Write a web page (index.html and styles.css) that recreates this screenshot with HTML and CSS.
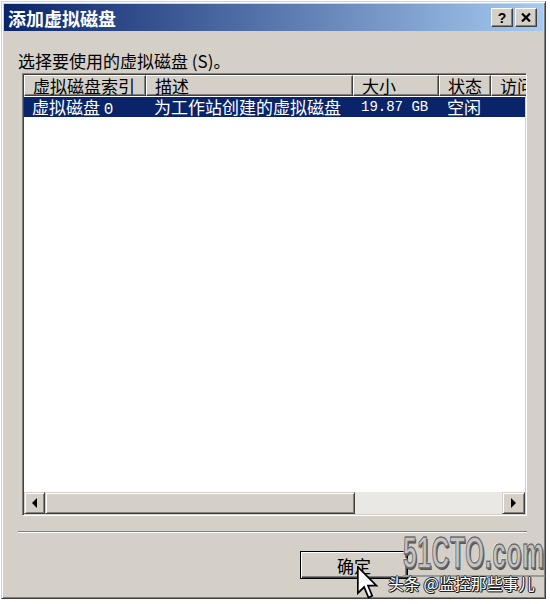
FILE: index.html
```html
<!DOCTYPE html>
<html lang="zh-CN">
<head>
    <meta charset="UTF-8">
    <title>添加虚拟磁盘</title>
    <link rel="stylesheet" href="styles.css">
</head>
<body>
    <div class="window">
        <!-- 标题栏 -->
        <div class="titlebar">
            <span class="title">添加虚拟磁盘</span>
            <div class="title-buttons">
                <span class="tbtn help">?</span>
                <span class="tbtn">
                    <svg width="10" height="9" viewBox="0 0 10 9"><path d="M1 0.5 L9 8.5 M9 0.5 L1 8.5" stroke="#000" stroke-width="2.2"/></svg>
                </span>
            </div>
        </div>

        <div class="content">
            <p class="label">选择要使用的虚拟磁盘 (S)。</p>

            <!-- 磁盘列表 -->
            <div class="listbox">
                <div class="list-head">
                    <div class="head-cell">虚拟磁盘索引</div>
                    <div class="head-cell">描述</div>
                    <div class="head-cell">大小</div>
                    <div class="head-cell">状态</div>
                    <div class="head-cell">访问</div>
                </div>
                <div class="list-row selected">
                    <div class="cell">虚拟磁盘 <span class="num">0</span></div>
                    <div class="cell">为工作站创建的虚拟磁盘</div>
                    <div class="cell mono">19.87 GB</div>
                    <div class="cell">空闲</div>
                    <div class="cell"></div>
                </div>
                <div class="list-empty"></div>
                <div class="hscroll">
                    <div class="sbtn"><span class="arrow-left"></span></div>
                    <div class="thumb"></div>
                    <div class="track"></div>
                    <div class="sbtn"><span class="arrow-right"></span></div>
                </div>
            </div>

            <div class="separator"></div>

            <div class="buttons">
                <button class="btn default">确定</button>
            </div>
        </div>

        <!-- 水印 -->
        <div class="wm-logo">51CTO.com</div>
        <div class="wm-text">头条 @监控那些事儿</div>

        <!-- 鼠标指针 -->
        <svg class="cursor" width="22" height="34" viewBox="0 0 13 20">
            <path d="M0.5 0.5 L0.5 16 L4.2 12.4 L6.8 18.6 L9 17.6 L6.5 11.6 L11.5 11.6 Z" fill="#fff" stroke="#000" stroke-width="1"/>
        </svg>
    </div>
</body>
</html>
```

FILE: styles.css
```css
body {
    margin: 0;
    background: #fff;
    font-family: "Noto Sans CJK SC", sans-serif;
    color: #000;
}
.window {
    position: relative;
    width: 545px;
    height: 598px;
    margin: 1px 0 0 1px;
    box-sizing: border-box;
    background: #d4d0c8;
    border: 1px solid;
    border-color: #d4d0c8 #404040 #404040 #d4d0c8;
    box-shadow: inset 1px 1px #fff, inset -1px -1px #808080;
    padding: 2px;
    display: flex;
    flex-direction: column;
}
.titlebar {
    height: 27px;
    background: linear-gradient(90deg, #0a246a, #a6caf0);
    display: flex;
    align-items: center;
    justify-content: space-between;
    padding: 0 6px 0 4px;
}
.title {
    color: #fff;
    font-weight: bold;
    font-size: 18px;
    line-height: 1;
}
.title-buttons {
    display: flex;
    gap: 2px;
}
.tbtn {
    width: 22px;
    height: 19px;
    box-sizing: border-box;
    background: #d4d0c8;
    border: 1px solid;
    border-color: #fff #404040 #404040 #fff;
    box-shadow: inset -1px -1px #808080;
    display: flex;
    align-items: center;
    justify-content: center;
}
.help {
    font: bold 14px "Liberation Sans", sans-serif;
}
.content {
    flex: 1;
    padding: 18px 16px 0 14px;
    display: flex;
    flex-direction: column;
}
.label {
    margin: 0;
    font-size: 17px;
    line-height: 24px;
}
.listbox {
    margin-left: 4px;
    height: 443px;
    box-sizing: border-box;
    border: 1px solid;
    border-color: #808080 #fff #fff #808080;
    box-shadow: inset 1px 1px #404040, inset -1px -1px #d4d0c8;
    background: #fff;
    padding: 1px;
    display: flex;
    flex-direction: column;
    overflow: hidden;
}
.list-head, .list-row {
    display: grid;
    grid-template-columns: 122px 207px 86px 52px 60px;
}
.list-head {
    height: 21px;
}
.head-cell {
    box-sizing: border-box;
    background: #d4d0c8;
    border: 1px solid;
    border-color: #fff #404040 #404040 #fff;
    box-shadow: inset -1px -1px #808080;
    padding-left: 8px;
    font-size: 17px;
    line-height: 19px;
    white-space: nowrap;
}
.list-row {
    height: 20px;
    margin-top: 1px;
}
.list-row.selected {
    background: #0a246a;
    color: #fff;
}
.cell {
    padding-left: 8px;
    font-size: 17px;
    line-height: 20px;
    white-space: nowrap;
}
.num {
    font-family: "Liberation Mono", monospace;
    font-size: 16px;
}
.mono {
    font-family: "Liberation Mono", monospace;
    font-size: 14px;
}
.list-empty {
    flex: 1;
}
.hscroll {
    height: 22px;
    display: flex;
}
.sbtn {
    width: 21px;
    box-sizing: border-box;
    background: #d4d0c8;
    border: 1px solid;
    border-color: #d4d0c8 #404040 #404040 #d4d0c8;
    box-shadow: inset 1px 1px #fff, inset -1px -1px #808080;
    display: flex;
    align-items: center;
    justify-content: center;
}
.sbtn:last-child {
    width: 23px;
}
.arrow-left {
    border-right: 5px solid #000;
    border-top: 5px solid transparent;
    border-bottom: 5px solid transparent;
}
.arrow-right {
    border-left: 5px solid #000;
    border-top: 5px solid transparent;
    border-bottom: 5px solid transparent;
}
.thumb {
    width: 310px;
    box-sizing: border-box;
    background: #d4d0c8;
    border: 1px solid;
    border-color: #d4d0c8 #404040 #404040 #d4d0c8;
    box-shadow: inset 1px 1px #fff, inset -1px -1px #808080;
}
.track {
    flex: 1;
    background: #eae8e4;
}
.separator {
    margin-top: 15px;
    border-top: 1px solid #808080;
    border-bottom: 1px solid #fff;
}
.buttons {
    display: flex;
    justify-content: flex-end;
    padding-right: 119px;
    margin-top: 18px;
}
.btn {
    width: 108px;
    height: 28px;
    background: #d4d0c8;
    border: 1px solid #000;
    box-shadow: inset 1px 1px #fff, inset -1px -1px #404040, inset -2px -2px #808080;
    font-family: "Noto Sans CJK SC", sans-serif;
    font-size: 17px;
    line-height: 1;
    padding: 0;
}
.wm-logo {
    position: absolute;
    left: 401px;
    top: 529px;
    font: bold 44px "Liberation Sans", sans-serif;
    color: #c4c4c4;
    letter-spacing: 1px;
    transform: scaleX(0.56);
    transform-origin: left top;
    -webkit-text-stroke: 1.5px #6a6a6a;
    text-shadow: -1px -1px 0 #fff, 2px 2px 0 #555;
    border-bottom: 2px solid #999;
    line-height: 44px;
}
.wm-text {
    position: absolute;
    left: 386px;
    top: 572px;
    font-size: 16px;
    line-height: 18px;
    color: #fff;
    white-space: nowrap;
    text-shadow: 1px 0 #222, -1px 0 #222, 0 1px #222, 0 -1px #222, 1px 1px #222;
}
.cursor {
    position: absolute;
    left: 355px;
    top: 564px;
}
```
